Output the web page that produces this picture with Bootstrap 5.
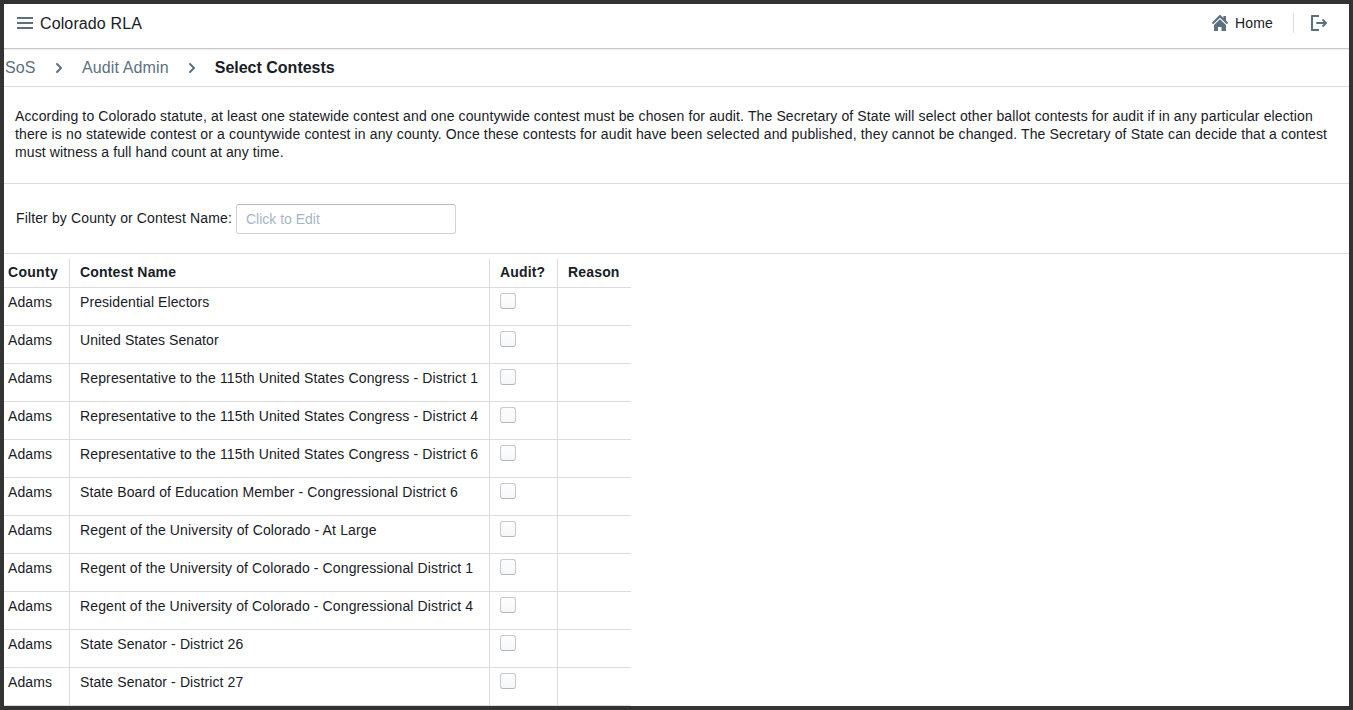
<!DOCTYPE html>
<html lang="en">
<head>
<meta charset="utf-8">
<meta name="viewport" content="width=device-width, initial-scale=1">
<title>Colorado RLA - Select Contests</title>
<link href="https://cdn.jsdelivr.net/npm/bootstrap@5.3.0/dist/css/bootstrap.min.css" rel="stylesheet">
<style>
  body { font: 14px/18px "Liberation Sans", Arial, sans-serif; color: #182026; height: 100vh; border: 4px solid #333; background: #fff; }
  svg { fill: #5c7080; flex: none; display: block; }
  .topbar { height: 44px; padding: 0 22px 6px 13px; box-shadow: 0 1px 0 #c9cacc, 0 2px 1px #eee; }
  .brand-name { font-size: 16px; letter-spacing: .12px; padding-top: 2px; margin-left: 7px; }
  .home-label { margin-left: 7px; letter-spacing: .15px; }
  .split { width: 1px; height: 20px; background: #dcdcdd; margin: 0 17px 0 20px; }
  .rule { border-bottom: 1px solid #dbdcdd; }
  .crumbs { height: 39px; font-size: 16px; padding: 1px 0 0 1px; }
  .crumbs a { color: #5c7080; letter-spacing: .12px; }
  .crumbs svg { margin: 0 15px; }
  .crumbs a:first-child { width: 31px; }
  .intro { height: 97px; padding: 20px 11px 0; }
  .intro span { display: block; white-space: nowrap; letter-spacing: .135px; }
  .intro span:first-child { letter-spacing: .122px; }
  .intro span:last-child { letter-spacing: .115px; }
  .filter { height: 70px; padding: 0 12px; }
  .filter label { letter-spacing: .13px; padding-bottom: 2px; }
  .filter .form-control { width: 220px; height: 30px; font-size: 14px; padding: 0 9px; border: 1px solid #d2d3d4; border-top-color: #b9babb; border-radius: 3px; }
  .filter .form-control::placeholder { color: #a7b6c2; opacity: 1; }
  .contests { width: 627px; table-layout: fixed; margin-top: 5px; border-collapse: separate; border-spacing: 0; letter-spacing: .08px; }
  .contests th, .contests td { vertical-align: top; padding: 5px 0 0 10px; border-bottom: 1px solid #dbdcdd; white-space: nowrap; }
  .contests th:not(:last-child), .contests td:not(:last-child) { border-right: 1px solid #dbdcdd; }
  .contests th:first-child, .contests td:first-child { padding-left: 4px; }
  .contests th { height: 29px; padding-top: 4px; letter-spacing: .17px; }
  .contests th:first-child { letter-spacing: .3px; }
  .contests td { height: 38px; }
  .contests .wide-text { letter-spacing: .135px; }
  .contests .mid-text { letter-spacing: .115px; }
  .contests .form-check-input { display: block; width: 16px; height: 16px; margin: 0; border: 1px solid #c7c9cb; border-bottom-color: #b4b6b8; border-radius: 3px; background: linear-gradient(#fdfdfe, #f4f7f9); }
</style>
</head>
<body class="overflow-hidden">
<nav class="topbar d-flex align-items-center justify-content-between">
  <div class="d-flex align-items-center">
    <svg width="16" height="16" viewBox="0 0 16 16"><path d="M0 2h16v2H0zM0 7h16v2H0zM0 12h16v2H0z"/></svg>
    <span class="brand-name">Colorado RLA</span>
  </div>
  <div class="d-flex align-items-center">
    <svg width="16" height="16" viewBox="0 0 16 16"><path d="M2 10v6h4v-4h3.5v4H14v-6L8 4.2zM15.7 7.3L14 5.6V1h-2.6v2.1L8.7.3a1 1 0 0 0-1.4 0l-7 7a1 1 0 0 0 1.4 1.4L8 2.7l6.3 6a1 1 0 0 0 1.4-1.4z"/></svg>
    <span class="home-label">Home</span>
    <span class="split"></span>
    <svg width="16" height="16" viewBox="0 0 16 16"><path d="M8 14H2V2h6V0H1C.4 0 0 .4 0 1v14c0 .6.4 1 1 1h7zM15.7 7.3l-3-3a1 1 0 0 0-1.4 1.4L12.6 7H6a1 1 0 0 0 0 2h6.6l-1.3 1.3a1 1 0 0 0 1.4 1.4l3-3a1 1 0 0 0 0-1.4z"/></svg>
  </div>
</nav>
<div class="crumbs rule d-flex align-items-center">
  <a class="text-decoration-none" href="#">SoS</a>
  <svg width="16" height="16" viewBox="0 0 16 16"><path d="M10.71 7.29l-4-4a1.003 1.003 0 00-1.42 1.42L8.59 8 5.3 11.29c-.19.18-.3.43-.3.71a1.003 1.003 0 001.71.71l4-4c.18-.18.29-.43.29-.71 0-.28-.11-.53-.29-.71z"/></svg>
  <a class="text-decoration-none" href="#">Audit Admin</a>
  <svg width="16" height="16" viewBox="0 0 16 16"><path d="M10.71 7.29l-4-4a1.003 1.003 0 00-1.42 1.42L8.59 8 5.3 11.29c-.19.18-.3.43-.3.71a1.003 1.003 0 001.71.71l4-4c.18-.18.29-.43.29-.71 0-.28-.11-.53-.29-.71z"/></svg>
  <span class="fw-bold">Select Contests</span>
</div>
<div class="intro rule">
  <span>According to Colorado statute, at least one statewide contest and one countywide contest must be chosen for audit. The Secretary of State will select other ballot contests for audit if in any particular election</span>
  <span>there is no statewide contest or a countywide contest in any county. Once these contests for audit have been selected and published, they cannot be changed. The Secretary of State can decide that a contest</span>
  <span>must witness a full hand count at any time.</span>
</div>
<div class="filter rule d-flex align-items-center gap-1">
  <label for="filter">Filter by County or Contest Name:</label>
  <input id="filter" class="form-control" type="text" placeholder="Click to Edit">
</div>
<table class="contests">
  <colgroup><col style="width:66px"><col style="width:420px"><col style="width:68px"><col style="width:73px"></colgroup>
  <thead><tr><th>County</th><th>Contest Name</th><th>Audit?</th><th>Reason</th></tr></thead>
  <tbody>
    <tr><td>Adams</td><td>Presidential Electors</td><td><input class="form-check-input" type="checkbox"></td><td></td></tr>
    <tr><td>Adams</td><td>United States Senator</td><td><input class="form-check-input" type="checkbox"></td><td></td></tr>
    <tr><td>Adams</td><td class="wide-text">Representative to the 115th United States Congress - District 1</td><td><input class="form-check-input" type="checkbox"></td><td></td></tr>
    <tr><td>Adams</td><td class="wide-text">Representative to the 115th United States Congress - District 4</td><td><input class="form-check-input" type="checkbox"></td><td></td></tr>
    <tr><td>Adams</td><td class="wide-text">Representative to the 115th United States Congress - District 6</td><td><input class="form-check-input" type="checkbox"></td><td></td></tr>
    <tr><td>Adams</td><td class="mid-text">State Board of Education Member - Congressional District 6</td><td><input class="form-check-input" type="checkbox"></td><td></td></tr>
    <tr><td>Adams</td><td class="wide-text">Regent of the University of Colorado - At Large</td><td><input class="form-check-input" type="checkbox"></td><td></td></tr>
    <tr><td>Adams</td><td class="mid-text">Regent of the University of Colorado - Congressional District 1</td><td><input class="form-check-input" type="checkbox"></td><td></td></tr>
    <tr><td>Adams</td><td class="mid-text">Regent of the University of Colorado - Congressional District 4</td><td><input class="form-check-input" type="checkbox"></td><td></td></tr>
    <tr><td>Adams</td><td class="mid-text">State Senator - District 26</td><td><input class="form-check-input" type="checkbox"></td><td></td></tr>
    <tr><td>Adams</td><td class="mid-text">State Senator - District 27</td><td><input class="form-check-input" type="checkbox"></td><td></td></tr>
  </tbody>
</table>
<script src="https://cdn.jsdelivr.net/npm/bootstrap@5.3.0/dist/js/bootstrap.bundle.min.js"></script>
</body>
</html>
